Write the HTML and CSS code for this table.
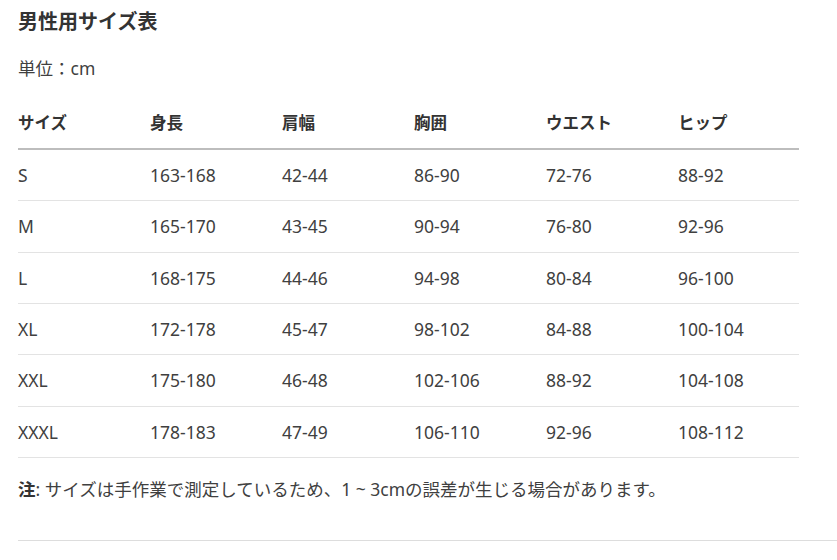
FILE: index.html
```html
<!DOCTYPE html>
<html lang="ja">
<head>
<meta charset="utf-8">
<title>男性用サイズ表</title>
<link rel="stylesheet" href="styles.css">
</head>
<body>
<div class="page">
  <h2 class="title">男性用サイズ表</h2>
  <p class="unit">単位：cm</p>
  <table class="size-table">
    <colgroup>
      <col class="c"><col class="c"><col class="c"><col class="c"><col class="c"><col class="c-last">
    </colgroup>
    <thead>
      <tr><th>サイズ</th><th>身長</th><th>肩幅</th><th>胸囲</th><th>ウエスト</th><th>ヒップ</th></tr>
    </thead>
    <tbody>
      <tr><td>S</td><td>163-168</td><td>42-44</td><td>86-90</td><td>72-76</td><td>88-92</td></tr>
      <tr><td>M</td><td>165-170</td><td>43-45</td><td>90-94</td><td>76-80</td><td>92-96</td></tr>
      <tr><td>L</td><td>168-175</td><td>44-46</td><td>94-98</td><td>80-84</td><td>96-100</td></tr>
      <tr><td>XL</td><td>172-178</td><td>45-47</td><td>98-102</td><td>84-88</td><td>100-104</td></tr>
      <tr><td>XXL</td><td>175-180</td><td>46-48</td><td>102-106</td><td>88-92</td><td>104-108</td></tr>
      <tr><td>XXXL</td><td>178-183</td><td>47-49</td><td>106-110</td><td>92-96</td><td>108-112</td></tr>
    </tbody>
  </table>
  <p class="note"><strong>注</strong>: サイズは手作業で測定しているため、1 ~ 3cmの誤差が生じる場合があります。</p>
  <div class="rule"></div>
</div>
</body>
</html>
```

FILE: styles.css
```css
html, body {
  margin: 0;
  padding: 0;
  background: #ffffff;
}
body {
  font-family: "Noto Sans", "Noto Sans CJK JP", sans-serif;
  color: #404040;
  font-size: 17.5px;
}
.page {
  padding: 8px 0 0 18px;
}
.title {
  margin: 0;
  font-size: 20px;
  line-height: 28px;
  font-weight: 700;
  color: #333333;
}
.unit {
  margin: 20px 0 0 0;
  line-height: 24px;
  font-size: 17.5px;
}
.size-table {
  margin-top: 18px;
  width: 781px;
  border-collapse: collapse;
  table-layout: fixed;
}
.size-table .c {
  width: 132px;
}
.size-table th,
.size-table td {
  text-align: left;
  padding: 0;
  vertical-align: middle;
}
.size-table th {
  font-weight: 700;
  font-size: 16.5px;
  color: #333333;
  height: 48px;
  border-bottom: 2px solid #bdbdbd;
  padding-bottom: 2px;
}
.size-table td {
  height: 50.33px;
  border-bottom: 1px solid #e3e3e3;
}
.note {
  margin: 0;
  height: 63px;
  line-height: 63px;
}
.note strong {
  font-weight: 700;
  color: #333333;
}
.rule {
  margin-top: 19px;
  border-top: 1px solid #dddddd;
}
```
